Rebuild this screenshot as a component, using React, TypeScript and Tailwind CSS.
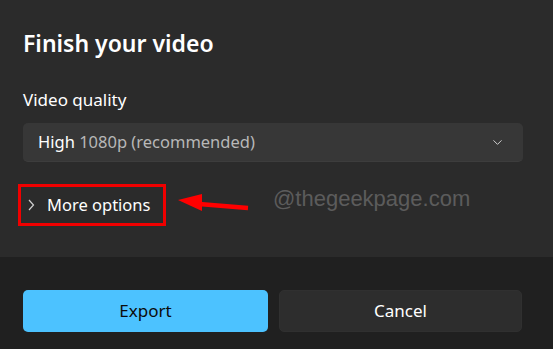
import { ChevronDown } from "lucide-react";

const font = { fontFamily: '"Noto Sans", "Open Sans", sans-serif' };

const RedArrow = () => (
  <svg width="74" height="20" viewBox="0 0 74 20" className="shrink-0">
    <polygon points="1,6 25,0 25,17" fill="#ff0000" />
    <line x1="22" y1="10" x2="71" y2="14" stroke="#ff0000" strokeWidth="4.5" />
  </svg>
);

const App = () => {
  return (
    <div
      className="w-[553px] h-[349px] bg-[#2b2b2b] flex flex-col text-white overflow-hidden"
      style={font}
    >
      <div className="h-[257px] px-[23px] pt-[27px] flex flex-col">
        <h1 className="text-[23px] leading-[32px] font-semibold">Finish your video</h1>
        <div className="mt-[29px] text-[17px] leading-[24px]">Video quality</div>
        <div className="mt-[11px] h-[39px] w-[500px] rounded-[5px] bg-[#373737] border-b border-[#3d3d3d] flex items-center justify-between pl-[15px] pr-[18px]">
          <span className="text-[16.5px]">
            High <span className="text-[#b8b8b8]">1080p (recommended)</span>
          </span>
          <ChevronDown size={15} strokeWidth={1.6} className="text-[#d0d0d0]" />
        </div>
        <div className="mt-[22px] -ml-[5px] flex items-center">
          <div className="h-[42px] w-[148px] border-[3px] border-[#f00000] flex items-center pl-[7px]">
            <svg width="7" height="12" viewBox="0 0 7 12" className="shrink-0">
              <path d="M1 1 L5.5 6 L1 11" fill="none" stroke="#d0d0d0" strokeWidth="1.2" />
            </svg>
            <span className="ml-[12px] text-[16.5px] leading-none">More options</span>
          </div>
          <div className="ml-[11px] -mt-[3px]">
            <RedArrow />
          </div>
          <span
            className="ml-[22px] -mt-[14px] text-[22px] text-[#5c5c5c]"
            style={{ fontFamily: '"Liberation Sans", Arial, sans-serif' }}
          >
            @thegeekpage.com
          </span>
        </div>
      </div>
      <div className="flex-1 bg-[#202020] pl-[23px] pr-[31px] pt-[33px] flex gap-[11px] items-start">
        <button className="h-[42px] w-[245px] rounded-[5px] bg-[#4cc2ff] text-[#0b0b0b] text-[17px]">
          Export
        </button>
        <button className="h-[42px] w-[243px] rounded-[5px] bg-[#2d2d2d] border border-[#303030] text-white text-[17px]">
          Cancel
        </button>
      </div>
    </div>
  );
};

export default App;
